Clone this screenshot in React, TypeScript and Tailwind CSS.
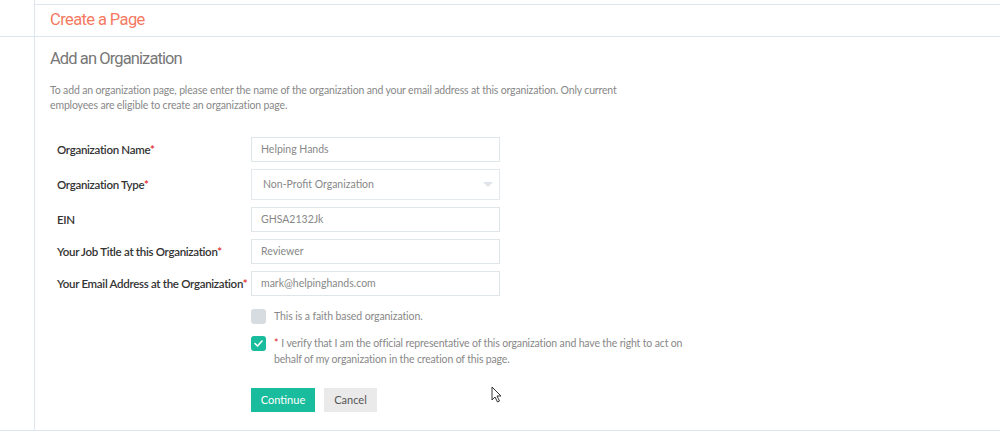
import React from 'react';

const body = { fontFamily: 'Lato, "Open Sans", sans-serif' };
const heading = { fontFamily: '"Liberation Sans Narrow", Roboto, sans-serif' };

interface Field {
  label: string;
  required: boolean;
  value: string;
  select?: boolean;
}

const fields: Field[] = [
  { label: 'Organization Name', required: true, value: 'Helping Hands' },
  { label: 'Organization Type', required: true, value: 'Non-Profit Organization', select: true },
  { label: 'EIN', required: false, value: 'GHSA2132Jk' },
  { label: 'Your Job Title at this Organization', required: true, value: 'Reviewer' },
  { label: 'Your Email Address at the Organization', required: true, value: 'mark@helpinghands.com' },
];

function FormRow({ field }: { field: Field }) {
  return (
    <div className="flex items-center">
      <div
        className={
          field.required
            ? "w-[201px] shrink-0 pl-[7px] whitespace-nowrap text-[11.5px] tracking-[-0.3px] font-semibold text-[#333] after:content-['*'] after:text-[#e02424]"
            : 'w-[201px] shrink-0 pl-[7px] whitespace-nowrap text-[11.5px] tracking-[-0.3px] font-semibold text-[#333]'
        }
      >
        {field.label}
      </div>
      {field.select ? (
        <div className="w-[249px] h-[31px] border border-[#e3e9ed] bg-white flex items-center justify-between pl-[11px] pr-[4px] text-[10.5px] text-[#888]">
          <span>{field.value}</span>
          <svg width="12" height="7" viewBox="0 0 12 7" className="mr-[1px]">
            <path d="M1 1 L11 1 L6 6 Z" fill="#dde3e8" />
          </svg>
        </div>
      ) : (
        <div className="w-[249px] h-[25px] border border-[#dfe6ea] bg-white flex items-center pl-[9px] text-[10.5px] text-[#888]">
          {field.value}
        </div>
      )}
    </div>
  );
}

export default function App() {
  return (
    <div className="w-[1000px] h-[437px] bg-white relative overflow-hidden" style={body}>
      <div className="flex h-[37px] border-b border-[#dde6ee]">
        <div className="w-[35px] shrink-0 border-r border-[#dde6ee]" />
        <div className="flex-1 mt-[4px] border-t border-[#dde6ee] flex items-center pl-[15px]">
          <h1 className="text-[16.5px] tracking-[-0.6px] text-[#f47a62] leading-none" style={heading}>Create a Page</h1>
        </div>
      </div>
      <div className="flex h-[394px] border-b border-[#dde6ee]">
        <div className="w-[35px] shrink-0 border-r border-[#dde6ee]" />
        <div className="flex-1 pl-[15px] pt-[11px]">
          <h2 className="text-[16.5px] tracking-[-0.9px] text-[#777] leading-[22px]" style={heading}>Add an Organization</h2>
          <p className="mt-[13px] w-[574px] text-[10.5px] tracking-[-0.15px] leading-[15px] text-[#888]">
            To add an organization page, please enter the name of the organization and your email address at this organization. Only current employees are eligible to create an organization page.
          </p>
          <div className="mt-[24px] flex flex-col gap-[7px]">
            {fields.map((f) => (
              <FormRow key={f.label} field={f} />
            ))}
          </div>
          <div className="ml-[201px] mt-[13px] flex flex-col gap-[10px]">
            <div className="flex items-center gap-[8px]">
              <span className="w-[15px] h-[15px] rounded-[3px] bg-[#d6dce0]" />
              <span className="text-[10.5px] tracking-[-0.1px] text-[#888]">This is a faith based organization.</span>
            </div>
            <div className="flex items-start gap-[8px]">
              <span className="w-[15px] h-[15px] shrink-0 mt-[1px] rounded-[3px] bg-[#19bc9c] flex items-center justify-center">
                <svg width="9" height="7" viewBox="0 0 9 7">
                  <path d="M1 3.5 L3.5 6 L8 1" stroke="#fff" strokeWidth="1.6" fill="none" strokeLinecap="round" strokeLinejoin="round" />
                </svg>
              </span>
              <p className="w-[412px] text-[10.5px] tracking-[-0.15px] leading-[16px] text-[#888] before:content-['*'] before:text-[#e02424] before:mr-[3px]">
                I verify that I am the official representative of this organization and have the right to act on behalf of my organization in the creation of this page.
              </p>
            </div>
          </div>
          <div className="ml-[201px] mt-[21px] flex gap-[9px]">
            <button className="w-[64px] h-[24px] bg-[#19bc9c] text-white text-[11px]">Continue</button>
            <button className="w-[53px] h-[24px] bg-[#eaeaea] text-[#555] text-[11px]">Cancel</button>
          </div>
        </div>
      </div>
      <svg className="absolute left-[491px] top-[386px]" width="12" height="17" viewBox="0 0 12 17">
        <path d="M1 1 L1 14 L4 11 L6.5 16 L8.5 15 L6 10 L10 10 Z" fill="#fff" stroke="#333" strokeWidth="1" strokeLinejoin="round" />
      </svg>
    </div>
  );
}
